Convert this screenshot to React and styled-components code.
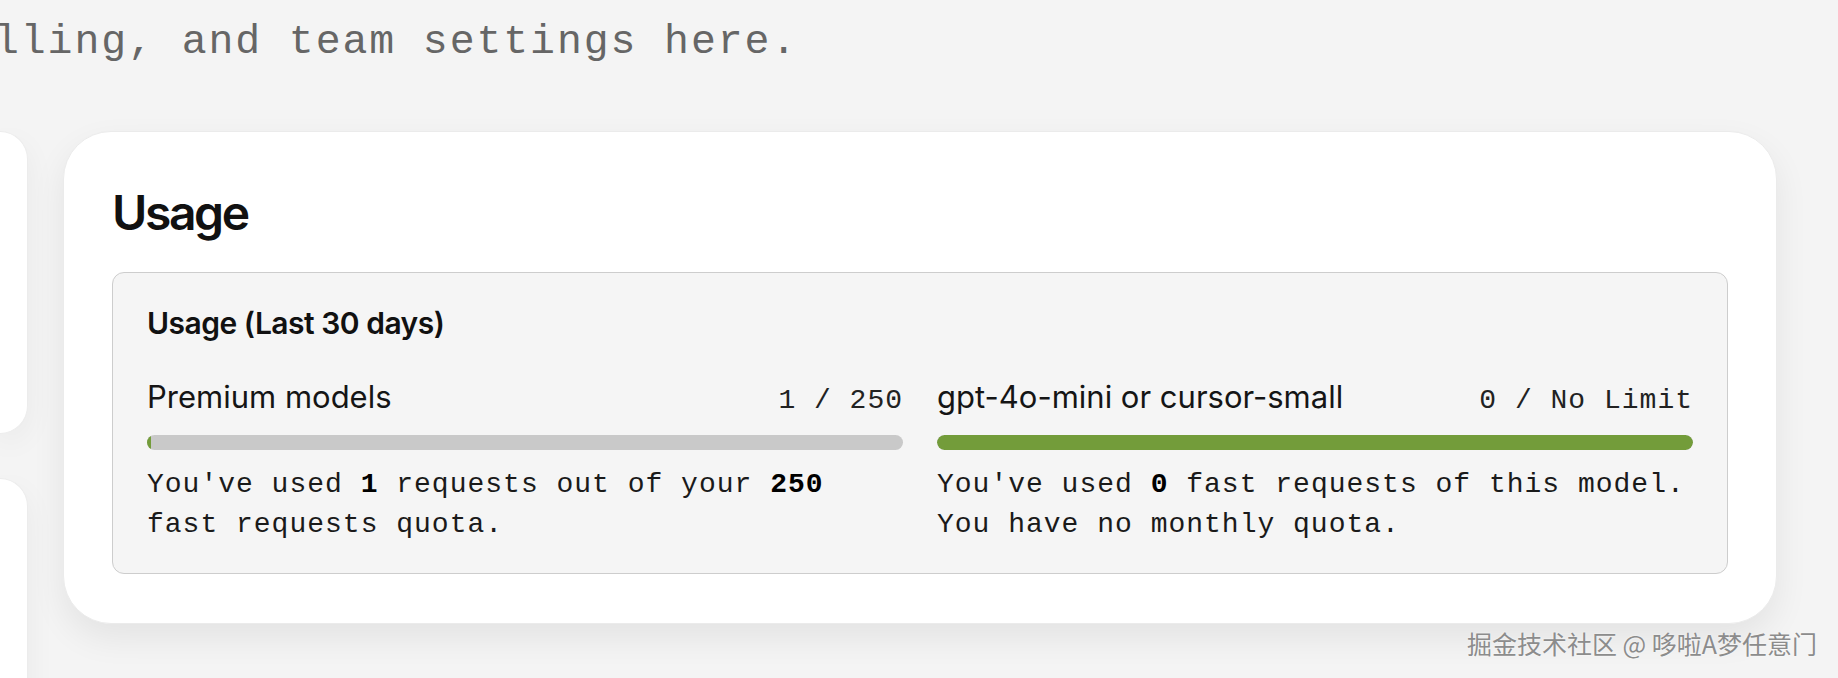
import React from "react";
import styled, { createGlobalStyle } from "styled-components";

const GlobalStyle = createGlobalStyle`
  html, body {
    margin: 0;
    padding: 0;
    overflow: hidden;
    background: #f4f4f4;
  }
  * {
    box-sizing: border-box;
  }
`;

const MONO = `"Liberation Mono", "DejaVu Sans Mono", monospace`;
const SANS = `Inter, "Noto Sans", sans-serif`;

const Page = styled.div`
  position: relative;
  width: 1838px;
  height: 678px;
  padding: 12px 61px 0 0;
  background: #f4f4f4;
`;

const Intro = styled.p`
  margin: 0;
  font-family: ${MONO};
  font-size: 41.5px;
  line-height: 60px;
  letter-spacing: 1.9px;
  color: #666;
  white-space: nowrap;
  text-indent: -6px;
`;

const Columns = styled.div`
  display: flex;
  gap: 35px;
  margin-top: 59px;
  align-items: flex-start;
`;

const Sidebar = styled.div`
  width: 28px;
  flex-shrink: 0;
  display: flex;
  flex-direction: column;
  gap: 44px;
`;

const SideCard = styled.div`
  height: ${(p) => p.$height}px;
  background: #fff;
  border: 1px solid #ececec;
  border-left: none;
  border-radius: 0 44px 44px 0;
  box-shadow: 0 10px 30px rgba(0, 0, 0, 0.05);
`;

const Card = styled.section`
  flex: 1;
  background: #fff;
  border: 1px solid #ebebeb;
  border-radius: 48px;
  padding: 52px 48px 49px;
  box-shadow: 0 14px 34px rgba(0, 0, 0, 0.07);
`;

const Title = styled.h2`
  margin: 0 0 30px;
  font-family: ${SANS};
  font-size: 48px;
  line-height: 58px;
  font-weight: 600;
  letter-spacing: -2.4px;
  color: #111;
`;

const UsageBox = styled.div`
  background: #f5f5f5;
  border: 1px solid #cdcdcd;
  border-radius: 12px;
  padding: 32px 34px 28px;
`;

const BoxTitle = styled.h3`
  margin: 0 0 38px;
  font-family: ${SANS};
  font-size: 30px;
  line-height: 36px;
  font-weight: 600;
  letter-spacing: -0.5px;
  color: #111;
`;

const MeterGrid = styled.div`
  display: grid;
  grid-template-columns: 1fr 1fr;
  gap: 34px;
`;

const Meter = styled.div`
  display: flex;
  flex-direction: column;
`;

const MeterHead = styled.div`
  display: flex;
  justify-content: space-between;
  align-items: baseline;
  margin-bottom: 16px;
`;

const MeterLabel = styled.span`
  font-family: ${SANS};
  font-size: 31px;
  line-height: 36px;
  letter-spacing: 0;
  color: #151515;
`;

const MeterValue = styled.span`
  font-family: ${MONO};
  font-size: 28px;
  line-height: 36px;
  letter-spacing: 1px;
  color: #222;
`;

const Track = styled.div`
  height: 15px;
  border-radius: 8px;
  background: #c9c9c9;
  overflow: hidden;
`;

const Fill = styled.div`
  height: 100%;
  min-width: 4px;
  border-radius: 8px;
  background: #739c3a;
`;

const Note = styled.p`
  margin: 15px 0 0;
  font-family: ${MONO};
  font-size: 28px;
  line-height: 40px;
  letter-spacing: 1px;
  color: #1a1a1a;

  b {
    font-weight: 700;
    color: #000;
  }
`;

const Watermark = styled.div`
  position: absolute;
  right: 21px;
  top: 627px;
  font-family: "Noto Sans CJK SC", "Noto Sans", sans-serif;
  font-size: 25px;
  line-height: 32px;
  color: #8c8c8c;
  text-shadow: 0 0 2px rgba(255, 255, 255, 0.9);
  white-space: nowrap;
`;

const meters = [
  {
    label: "Premium models",
    used: 1,
    limit: 250,
    value: "1 / 250",
    note: (
      <>
        You've used <b>1</b> requests out of your <b>250</b>
        <br />
        fast requests quota.
      </>
    ),
  },
  {
    label: "gpt-4o-mini or cursor-small",
    used: 0,
    limit: null,
    value: "0 / No Limit",
    note: (
      <>
        You've used <b>0</b> fast requests of this model.
        <br />
        You have no monthly quota.
      </>
    ),
  },
];

function UsageMeter({ label, used, limit, value, note }) {
  const pct = limit ? (used / limit) * 100 : 100;
  return (
    <Meter>
      <MeterHead>
        <MeterLabel>{label}</MeterLabel>
        <MeterValue>{value}</MeterValue>
      </MeterHead>
      <Track>
        <Fill style={{ width: `${pct}%` }} />
      </Track>
      <Note>{note}</Note>
    </Meter>
  );
}

export default function App() {
  return (
    <>
      <GlobalStyle />
      <Page>
        <Intro>lling, and team settings here.</Intro>
        <Columns>
          <Sidebar>
            <SideCard $height={303} />
            <SideCard $height={400} />
          </Sidebar>
          <Card>
            <Title>Usage</Title>
            <UsageBox>
              <BoxTitle>Usage (Last 30 days)</BoxTitle>
              <MeterGrid>
                {meters.map((m) => (
                  <UsageMeter key={m.label} {...m} />
                ))}
              </MeterGrid>
            </UsageBox>
          </Card>
        </Columns>
        <Watermark>掘金技术社区 @ 哆啦A梦任意门</Watermark>
      </Page>
    </>
  );
}
